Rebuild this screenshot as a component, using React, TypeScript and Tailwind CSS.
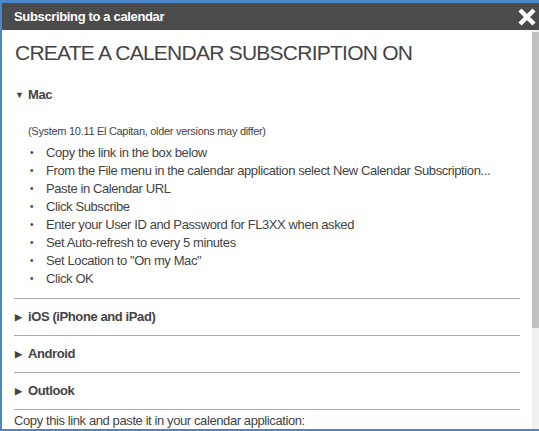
const steps = [
  'Copy the link in the box below',
  'From the File menu in the calendar application select New Calendar Subscription...',
  'Paste in Calendar URL',
  'Click Subscribe',
  'Enter your User ID and Password for FL3XX when asked',
  'Set Auto-refresh to every 5 minutes',
  'Set Location to "On my Mac"',
  'Click OK',
];

const others = ['iOS (iPhone and iPad)', 'Android', 'Outlook'];

function Section({ label, open }: { label: string; open?: boolean }) {
  return (
    <div className="flex items-center h-[18px] text-[13px] font-bold text-[#444] tracking-[-0.4px]">
      <span className="w-[14px] pl-[1px] text-[9px] leading-none">{open ? '▼' : '▶'}</span>
      {label}
    </div>
  );
}

export default function App() {
  return (
    <div className="w-[539px] h-[431px] bg-[#4a86c8] pt-[3px] pl-[2px] pb-[2px] overflow-hidden font-['Liberation_Sans',Arial,sans-serif]">
      <div className="h-full flex flex-col bg-white">
        <div className="h-[27px] shrink-0 bg-[#4b4b4b] flex items-center justify-between pl-[12px] pr-[2px]">
          <span className="text-white text-[13px] font-bold tracking-[-0.35px]">Subscribing to a calendar</span>
          <svg width="20" height="18" viewBox="0 0 20 18">
            <path d="M3 2 L17 16 M17 2 L3 16" stroke="white" strokeWidth="4.5" />
          </svg>
        </div>
        <div className="flex-1 flex min-h-0">
          <div className="flex-1 pl-[12px] pr-[12px] text-[#444]">
            <h1 className="text-[21px] leading-none mt-[12px] mb-[23px] ml-[1px] tracking-[-0.75px]">CREATE A CALENDAR SUBSCRIPTION ON</h1>
            <Section label="Mac" open />
            <p className="text-[11px] mt-[20px] ml-[14px] leading-[14px] tracking-[-0.3px]">(System 10.11 El Capitan, older versions may differ)</p>
            <ul className="mt-[6px] text-[13px] leading-[18px] tracking-[-0.4px]">
              {steps.map((s) => (
                <li key={s} className="flex">
                  <span className="w-[32px] pl-[16px] text-[10px]">•</span>
                  <span className="whitespace-nowrap">{s}</span>
                </li>
              ))}
            </ul>
            <div className="mt-[10px]">
              {others.map((o) => (
                <div key={o} className="border-t border-[#aaa] pt-[9px] pb-[9px]">
                  <Section label={o} />
                </div>
              ))}
            </div>
            <div className="border-t border-[#aaa] pt-[2px] text-[13px] leading-[18px] tracking-[-0.4px]">
              Copy this link and paste it in your calendar application:
            </div>
          </div>
          <div className="w-[7px] shrink-0 bg-[#f1f1f1] flex flex-col">
            <div className="h-[296px] bg-[#c1c1c1] mt-[2px]" />
          </div>
        </div>
      </div>
    </div>
  );
}
